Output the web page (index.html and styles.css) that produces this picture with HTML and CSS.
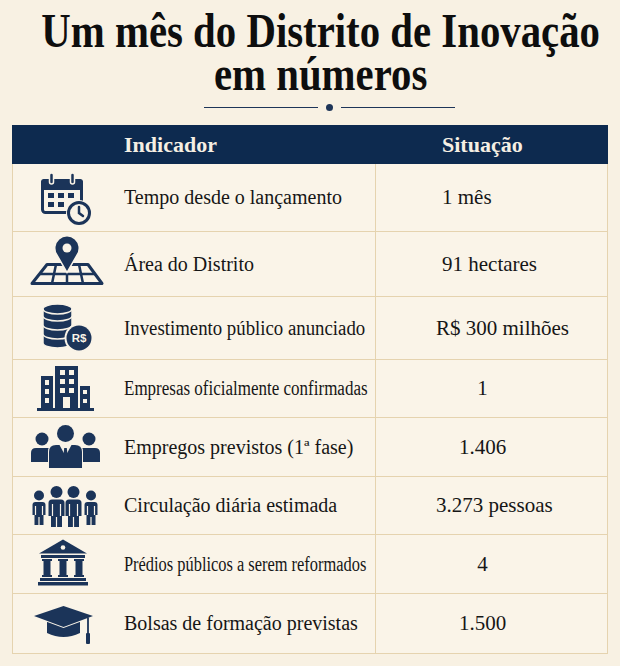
FILE: index.html
```html
<!DOCTYPE html>
<html lang="pt-BR">
<head>
<meta charset="utf-8">
<title>Um mês do Distrito de Inovação em números</title>
<link rel="stylesheet" href="styles.css">
</head>
<body>
<header class="title-wrap">
  <h1 class="title">Um mês do Distrito de Inovação<br>em números</h1>
</header>
<div class="divider"><span class="rule"></span><span class="dot"></span><span class="rule"></span></div>
<table class="stats">
  <colgroup><col class="c-ind"><col class="c-val"></colgroup>
  <thead>
    <tr><th class="h-ind">Indicador</th><th class="h-sit">Situação</th></tr>
  </thead>
  <tbody>
    <tr>
      <td><div class="ind-cell">
        <svg class="icon" viewBox="0 0 76 56">
          <rect x="15.5" y="10.5" width="39" height="32" rx="3" fill="none" stroke="#1b3459" stroke-width="3"/>
          <rect x="14" y="9" width="42" height="11" rx="3"/>
          <rect x="22.5" y="3" width="4" height="11" rx="2" stroke="#f9f3e7" stroke-width="1.5"/>
          <rect x="43.5" y="3" width="4" height="11" rx="2" stroke="#f9f3e7" stroke-width="1.5"/>
          <rect x="21" y="23" width="6" height="5"/><rect x="31" y="23" width="6" height="5"/><rect x="41" y="23" width="6" height="5"/>
          <rect x="21" y="32" width="6" height="5"/><rect x="31" y="32" width="6" height="5"/>
          <circle cx="52" cy="43" r="13" fill="#f9f3e7"/>
          <circle cx="52" cy="43" r="10.5" fill="#f9f3e7" stroke="#1b3459" stroke-width="3"/>
          <path d="M52 37v6l4 3" fill="none" stroke="#1b3459" stroke-width="2.5" stroke-linecap="round"/>
        </svg>
        <span class="label">Tempo desde o lançamento</span></div></td>
      <td class="val l1">1 mês</td>
    </tr>
    <tr>
      <td><div class="ind-cell">
        <svg class="icon" viewBox="0 0 76 56">
          <path d="M5 47.5 L20 28.5 H61 L75 47.5 Z" fill="none" stroke="#1b3459" stroke-width="3" stroke-linejoin="round"/>
          <path d="M12.5 38 H68 M29 28.5 L25 47.5 M52 28.5 L56 47.5 M40 38 V47.5" fill="none" stroke="#1b3459" stroke-width="2.5"/>
          <path d="M40 35 L30.5 18.5 A11.5 11.5 0 1 1 49.5 18.5 Z" stroke="#f9f3e7" stroke-width="3" paint-order="stroke"/>
          <circle cx="40" cy="12" r="4.5" fill="#f9f3e7"/>
        </svg>
        <span class="label">Área do Distrito</span></div></td>
      <td class="val l1">91 hectares</td>
    </tr>
    <tr>
      <td><div class="ind-cell">
        <svg class="icon" viewBox="0 0 76 56">
          <path d="M16 36 v7 a14.5 5 0 0 0 29 0 v-7 a14.5 5 0 0 0 -29 0 z" stroke="#f9f3e7" stroke-width="1.5"/>
          <path d="M16 27 v7 a14.5 5 0 0 0 29 0 v-7 a14.5 5 0 0 0 -29 0 z" stroke="#f9f3e7" stroke-width="1.5"/>
          <path d="M16 18 v7 a14.5 5 0 0 0 29 0 v-7 a14.5 5 0 0 0 -29 0 z" stroke="#f9f3e7" stroke-width="1.5"/>
          <path d="M16 9 v7 a14.5 5 0 0 0 29 0 v-7 a14.5 5 0 0 0 -29 0 z" stroke="#f9f3e7" stroke-width="1.5"/>
          <path d="M16 9 a14.5 5 0 0 0 29 0" fill="none" stroke="#f9f3e7" stroke-width="1.5"/>
          <circle cx="52" cy="38" r="14.5" fill="#f9f3e7"/>
          <circle cx="52" cy="38" r="12.5"/>
          <text x="52" y="42.2" text-anchor="middle" class="coin-text">R$</text>
        </svg>
        <span class="label sx94">Investimento público anunciado</span></div></td>
      <td class="val l2">R$ 300 milhões</td>
    </tr>
    <tr>
      <td><div class="ind-cell">
        <svg class="icon" viewBox="0 0 76 56">
          <rect x="28" y="5" width="23" height="43"/>
          <rect x="14" y="15" width="12" height="33"/>
          <rect x="53" y="25" width="10" height="23"/>
          <rect x="10" y="47" width="57" height="3"/>
          <g fill="#f9f3e7">
            <rect x="33" y="9" width="5" height="5"/><rect x="42" y="9" width="5" height="5"/>
            <rect x="33" y="18" width="5" height="5"/><rect x="42" y="18" width="5" height="5"/>
            <rect x="33" y="27" width="5" height="5"/><rect x="42" y="27" width="5" height="5"/>
            <rect x="36" y="36" width="7" height="11"/>
            <rect x="18" y="19" width="4" height="5"/><rect x="18" y="28" width="4" height="5"/><rect x="18" y="37" width="4" height="5"/>
            <rect x="56" y="29" width="4" height="4"/><rect x="56" y="38" width="4" height="4"/>
          </g>
        </svg>
        <span class="label sx85">Empresas oficialmente confirmadas</span></div></td>
      <td class="val">1</td>
    </tr>
    <tr>
      <td><div class="ind-cell">
        <svg class="icon" viewBox="0 0 76 56">
          <circle cx="15" cy="20" r="6.5"/>
          <path d="M4 43 V34 Q4 29 9 29 H21 Q26 29 26 34 V43 Z"/>
          <circle cx="62" cy="20" r="6.5"/>
          <path d="M51 43 V34 Q51 29 56 29 H68 Q73 29 73 34 V43 Z"/>
          <circle cx="38.5" cy="14.5" r="8.5" stroke="#f9f3e7" stroke-width="2" paint-order="stroke"/>
          <path d="M22 49 V33 Q22 26 29 26 H48 Q55 26 55 33 V49 Z" stroke="#f9f3e7" stroke-width="2" paint-order="stroke"/>
          <path d="M32.5 26 L38.5 37 L44.5 26 Z" fill="#f9f3e7"/>
          <path d="M37.2 29 H39.8 L41 41 L38.5 44 L36 41 Z"/>
        </svg>
        <span class="label">Empregos previstos (1ª fase)</span></div></td>
      <td class="val">1.406</td>
    </tr>
    <tr>
      <td><div class="ind-cell">
        <svg class="icon" viewBox="0 0 76 56">
          <circle cx="12" cy="17.5" r="5"/>
          <path d="M5.5 37 V27 Q5.5 24 8.5 24 H15.5 Q18.5 24 18.5 27 V37 Z"/>
          <rect x="7.5" y="35" width="9" height="12"/>
          <circle cx="64" cy="17.5" r="5"/>
          <path d="M57.5 37 V27 Q57.5 24 60.5 24 H67.5 Q70.5 24 70.5 27 V37 Z"/>
          <rect x="59.5" y="35" width="9" height="12"/>
          <circle cx="29.5" cy="14" r="6"/>
          <path d="M21.5 38 V25 Q21.5 21.5 25 21.5 H34 Q37.5 21.5 37.5 25 V38 Z"/>
          <rect x="24" y="36" width="11" height="13"/>
          <circle cx="46.5" cy="14" r="6"/>
          <path d="M38.5 38 V25 Q38.5 21.5 42 21.5 H51 Q54.5 21.5 54.5 25 V38 Z"/>
          <rect x="41" y="36" width="11" height="13"/>
          <path d="M12 39 V47 M64 39 V47 M29.5 39 V49 M46.5 39 V49 M25.5 26 V38 M33.5 26 V38 M42.5 26 V38 M50.5 26 V38 M8.5 28 V37 M15.5 28 V37 M60.5 28 V37 M67.5 28 V37" stroke="#f9f3e7" stroke-width="1.2" fill="none"/>
        </svg>
        <span class="label">Circulação diária estimada</span></div></td>
      <td class="val l2">3.273 pessoas</td>
    </tr>
    <tr>
      <td><div class="ind-cell">
        <svg class="icon" viewBox="0 0 76 56">
          <path d="M12 17.5 L36 3.5 L60 17.5 Z"/>
          <circle cx="36" cy="11.5" r="2.3" fill="#f9f3e7"/>
          <rect x="14" y="19" width="44" height="3"/>
          <rect x="16.5" y="23" width="7" height="18"/><rect x="32.5" y="23" width="7" height="18"/><rect x="48.5" y="23" width="7" height="18"/>
          <rect x="15" y="23" width="10" height="2"/><rect x="31" y="23" width="10" height="2"/><rect x="47" y="23" width="10" height="2"/>
          <rect x="15" y="39" width="10" height="2"/><rect x="31" y="39" width="10" height="2"/><rect x="47" y="39" width="10" height="2"/>
          <rect x="13" y="42" width="46" height="3"/>
          <rect x="11" y="46" width="50" height="3.5"/>
        </svg>
        <span class="label sx82">Prédios públicos a serem reformados</span></div></td>
      <td class="val">4</td>
    </tr>
    <tr>
      <td><div class="ind-cell">
        <svg class="icon" viewBox="0 0 76 56">
          <path d="M20 25 V37 Q36.5 45 53 37 V25 Z"/>
          <path d="M7 20 L36.5 10 L66 20 L36.5 31 Z" stroke="#f9f3e7" stroke-width="2" paint-order="stroke"/>
          <path d="M61 21.5 V38" stroke="#1b3459" stroke-width="1.8" fill="none"/>
          <rect x="59" y="37" width="4" height="11" rx="1"/>
        </svg>
        <span class="label">Bolsas de formação previstas</span></div></td>
      <td class="val">1.500</td>
    </tr>
  </tbody>
</table>
</body>
</html>
```
FILE: styles.css
```css
* { box-sizing: border-box; }
body {
  margin: 0;
  background: #f8f1e3;
  font-family: "Liberation Serif", "Times New Roman", serif;
  color: #161616;
}
.title-wrap {
  display: flex;
  justify-content: center;
  padding-left: 22px;
  margin-top: 9px;
}
.title {
  flex: none;
  margin: 0;
  font-size: 48px;
  line-height: 43px;
  font-weight: 700;
  text-align: center;
  white-space: nowrap;
  color: #0e0e0e;
  transform: scaleX(0.85);
}
.divider {
  display: flex;
  align-items: center;
  justify-content: center;
  gap: 8px;
  height: 7px;
  margin-top: 9px;
  padding-left: 38px;
}
.rule { width: 114px; height: 1px; background: #1e3558; }
.dot { width: 7px; height: 7px; border-radius: 50%; background: #1e3558; }

.stats {
  margin: 14px 0 0 12px;
  width: 595px;
  border-collapse: collapse;
  table-layout: fixed;
  background: #faf4e8;
}
.c-ind { width: 363px; }
.c-val { width: 232px; }
.stats th {
  background: #0d2a4f;
  color: #f5efe3;
  font-size: 22px;
  font-weight: 700;
  height: 38px;
  padding: 0;
  text-align: left;
  border: 1px solid #0d2a4f;
}
.stats th.h-ind { padding-left: 111px; }
.stats th.h-sit { padding-left: 66px; border-left: 1px solid #b7ab92; }
.stats td {
  border: 1px solid #e5d3af;
  padding: 0;
  vertical-align: middle;
  font-size: 20px;
  white-space: nowrap;
}
.stats tbody tr:nth-child(1) td { height: 68px; }
.stats tbody tr:nth-child(2) td { height: 65px; }
.stats tbody tr:nth-child(3) td { height: 63px; }
.stats tbody tr:nth-child(4) td { height: 58px; }
.stats tbody tr:nth-child(5) td { height: 59px; }
.stats tbody tr:nth-child(6) td { height: 58px; }
.stats tbody tr:nth-child(7) td { height: 59px; }
.stats tbody tr:nth-child(8) td { height: 60px; }

.ind-cell { display: flex; align-items: center; }
.icon {
  flex: none;
  width: 76px;
  height: 56px;
  margin-left: 14px;
  margin-right: 21px;
  fill: #1b3459;
  overflow: visible;
}
.coin-text {
  font-family: "Liberation Sans", Arial, sans-serif;
  font-weight: 700;
  font-size: 11.5px;
  fill: #f9f3e7;
}
.label { display: inline-block; transform-origin: left center; }
.sx94 { transform: scaleX(0.94); }
.sx85 { transform: scaleX(0.85); }
.sx82 { transform: scaleX(0.82); }

.stats td.val {
  font-size: 21px;
  text-align: center;
  padding-right: 18px;
}
.stats td.val.l1 { text-align: left; padding-left: 66px; padding-right: 0; }
.stats td.val.l2 { text-align: left; padding-left: 60px; padding-right: 0; }
```
